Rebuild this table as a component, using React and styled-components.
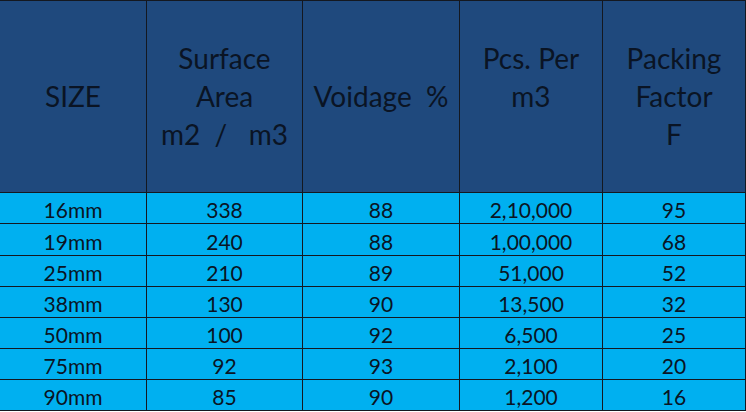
import React from "react";
import styled, { createGlobalStyle } from "styled-components";

const GlobalStyle = createGlobalStyle`
  html, body {
    margin: 0;
    padding: 0;
    background: #ffffff;
  }
`;

const Grid = styled.div`
  display: grid;
  grid-template-columns: 146px 155px 156px 142px 142px;
  grid-template-rows: 191px 30px 31px 30px 30px 30px 30px 30px;
  gap: 1px;
  width: 745px;
  padding: 1px 1px 1px 0;
  background: #141820;
  font-family: Lato, "Open Sans", sans-serif;
  color: #0a1424;
`;

const HeadCell = styled.div`
  background: #1f497d;
  display: flex;
  align-items: center;
  justify-content: center;
  text-align: center;
  font-size: 28px;
  line-height: 38px;
  white-space: pre;
  padding-bottom: 2px;
`;

const Cell = styled.div`
  background: #00b0f0;
  display: flex;
  align-items: center;
  justify-content: center;
  font-size: 21px;
  line-height: 1;
  padding-top: 3px;
`;

const headers = [
  "SIZE",
  "Surface\nArea\nm2  /   m3",
  "Voidage  %",
  "Pcs. Per\nm3\n ",
  "Packing\nFactor\nF",
];

const rows = [
  ["16mm", "338", "88", "2,10,000", "95"],
  ["19mm", "240", "88", "1,00,000", "68"],
  ["25mm", "210", "89", "51,000", "52"],
  ["38mm", "130", "90", "13,500", "32"],
  ["50mm", "100", "92", "6,500", "25"],
  ["75mm", "92", "93", "2,100", "20"],
  ["90mm", "85", "90", "1,200", "16"],
];

export default function App() {
  return (
    <>
      <GlobalStyle />
      <Grid>
        {headers.map((h) => (
          <HeadCell key={h}>{h}</HeadCell>
        ))}
        {rows.map((row, i) =>
          row.map((v, j) => <Cell key={i + "-" + j}>{v}</Cell>)
        )}
      </Grid>
    </>
  );
}
